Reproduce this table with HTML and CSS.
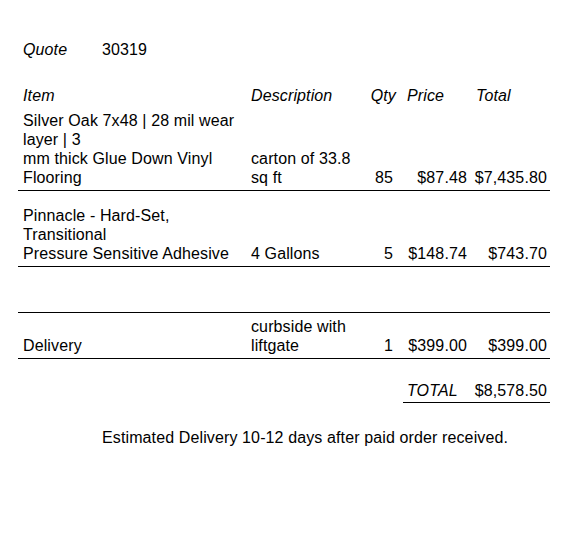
FILE: index.html
```html
<!DOCTYPE html>
<html>
<head>
<meta charset="utf-8">
<link rel="stylesheet" href="styles.css">
</head>
<body>
<div class="page">
  <div class="quote">
    <span class="quote-label">Quote</span>
    <span class="quote-num">30319</span>
  </div>
  <table class="items">
    <colgroup>
      <col class="c-item"><col class="c-desc"><col class="c-qty"><col class="c-price"><col class="c-total">
    </colgroup>
    <tr class="head">
      <td class="item">Item</td>
      <td class="desc">Description</td>
      <td class="qty qty-h">Qty</td>
      <td class="price-h">Price</td>
      <td class="total-h">Total</td>
    </tr>
    <tr class="row r1 line">
      <td class="item">Silver Oak 7x48 | 28 mil wear<br>layer | 3<br>mm thick Glue Down Vinyl<br>Flooring</td>
      <td class="desc">carton of 33.8<br>sq ft</td>
      <td class="qty">85</td>
      <td class="price">$87.48</td>
      <td class="total">$7,435.80</td>
    </tr>
    <tr class="row r2 line">
      <td class="item">Pinnacle - Hard-Set,<br>Transitional<br>Pressure Sensitive Adhesive</td>
      <td class="desc">4 Gallons</td>
      <td class="qty">5</td>
      <td class="price">$148.74</td>
      <td class="total">$743.70</td>
    </tr>
    <tr class="row r3 line">
      <td class="item"></td><td class="desc"></td><td class="qty"></td><td class="price"></td><td class="total"></td>
    </tr>
    <tr class="row r4 line">
      <td class="item">Delivery</td>
      <td class="desc">curbside with<br>liftgate</td>
      <td class="qty">1</td>
      <td class="price">$399.00</td>
      <td class="total">$399.00</td>
    </tr>
    <tr class="row r5">
      <td class="item"></td><td class="desc"></td><td class="qty"></td>
      <td class="price-h sum-label ruled">TOTAL</td>
      <td class="total ruled">$8,578.50</td>
    </tr>
  </table>
  <p class="note">Estimated Delivery 10-12 days after paid order received.</p>
</div>
</body>
</html>
```
FILE: styles.css
```css
html, body {
  margin: 0;
  padding: 0;
  background: #fff;
}
body {
  font-family: "Liberation Sans", Arial, sans-serif;
  font-size: 16px;
  line-height: 19.3px;
  letter-spacing: 0.12px;
  color: #000;
}
.page {
  padding: 40px 0 0 18px;
  width: 532px;
}
.quote {
  display: flex;
  padding-left: 5px;
}
.quote-label {
  font-style: italic;
  width: 79px;
}
.items {
  margin-top: 26px;
  border-collapse: collapse;
  table-layout: fixed;
  width: 532px;
}
.c-item { width: 229px; }
.c-desc { width: 119px; }
.c-qty { width: 37px; }
.c-price { width: 69px; }
.c-total { width: 78px; }
.items td {
  padding: 0 4px 2px 5px;
  vertical-align: bottom;
  white-space: nowrap;
}
.head td {
  font-style: italic;
  padding-top: 1px;
  padding-bottom: 2px;
}
.items td.desc { padding-left: 4px; }
.items td.qty { text-align: right; padding-right: 10px; padding-left: 0; }
.items td.qty-h { padding-right: 7px; }
.items td.price { text-align: right; padding-right: 5px; padding-left: 0; }
.items td.price-h { padding-left: 4px; }
.items td.total { text-align: right; padding-right: 3px; padding-left: 0; }
.items td.total-h { padding-left: 4px; }
.r1 td { padding-top: 3px; }
.line td { border-bottom: 1px solid #000; }
.r2 { height: 76px; }
.r3 { height: 46px; }
.r4 { height: 46px; }
.r5 { height: 44px; }
.r5 td { padding-bottom: 1px; }
.sum-label { font-style: italic; }
.items td.ruled { border-bottom: 1px solid #000; }
.note {
  margin: 25px 0 0 84px;
}
```
